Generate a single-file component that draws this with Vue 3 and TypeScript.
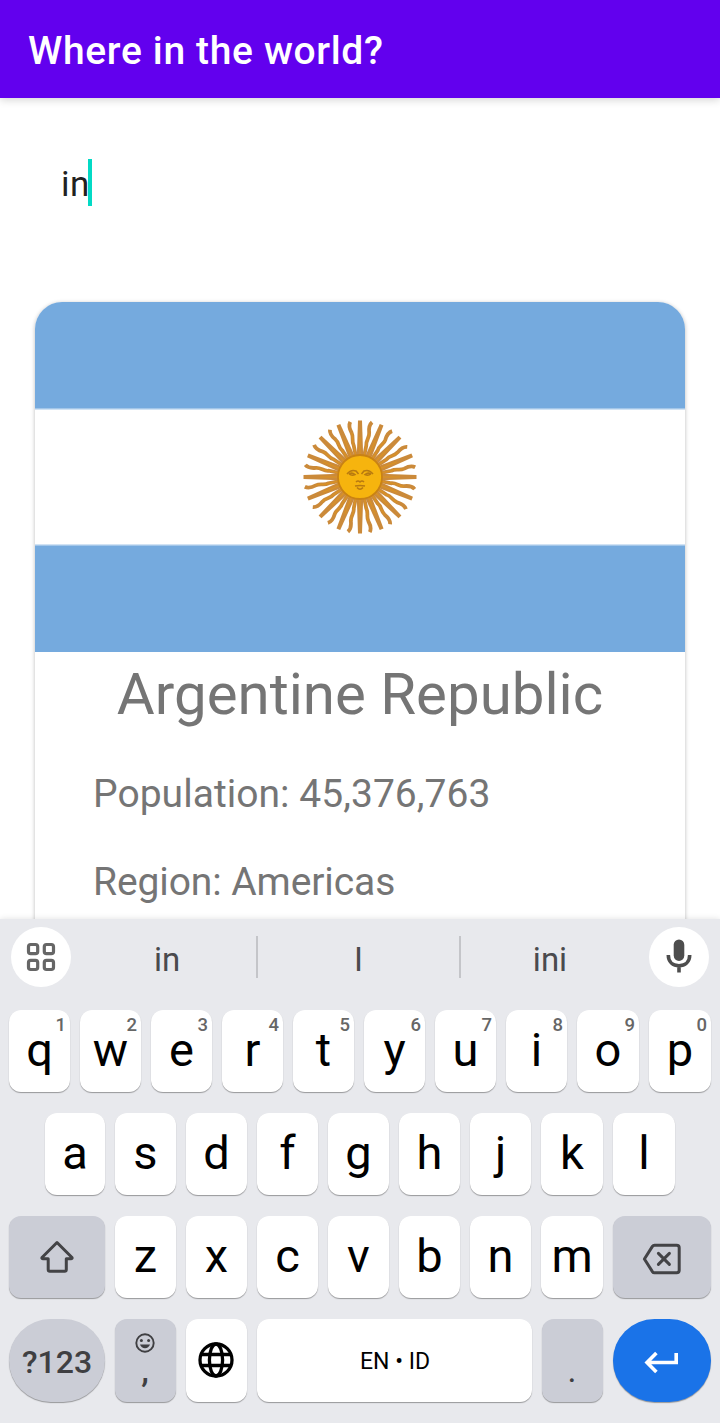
<script setup lang="ts">
import { ref } from 'vue'

interface Key {
  label: string
  hint?: string
}

const search = ref('in')

const country = {
  name: 'Argentine Republic',
  population: 45376763,
  region: 'Americas'
}

const suggestions = ['in', 'I', 'ini']

const topRow: Key[] = 'qwertyuiop'.split('').map((label, i) => ({ label, hint: String((i + 1) % 10) }))
const middleRow = 'asdfghjkl'.split('')
const bottomRow = 'zxcvbnm'.split('')

// 16 straight rays, with a wavy one between each pair
const rays = Array.from({ length: 16 }, (_, i) => i * 22.5)

const press = (label: string) => {
  search.value += label
}
const backspace = () => {
  search.value = search.value.slice(0, -1)
}
</script>

<template>
  <div class="screen">
    <header class="toolbar">
      <h1>Where in the world?</h1>
    </header>

    <main class="content">
      <div class="search"><span>{{ search }}</span><i class="cursor"></i></div>

      <article class="card">
        <div class="flag">
          <svg class="sun" viewBox="-60 -60 120 120">
            <g v-for="angle in rays" :key="angle" :transform="`rotate(${angle})`">
              <path class="ray" d="M-3.2 -20 L-2 -56.5 H2 L3.2 -20 Z" />
              <path class="ray-core" d="M0 -22 V-40" />
              <g transform="rotate(11.25)">
                <path class="wave" d="M0 -20 V-32 C-1.6 -37 1.8 -40 .4 -45 C-1.2 -50 -1.2 -53 1.2 -56" />
                <path class="wave-core" d="M0 -22 V-32 C-1.6 -37 1.8 -40 .4 -45" />
              </g>
            </g>
            <circle class="disc" r="22" />
            <g class="face">
              <path d="M-13 -3 Q-9 -8 -4 -6 L-1.5 -3 M13 -3 Q9 -8 4 -6 L1.5 -3" />
              <path d="M-11 -3 Q-8 -5 -5 -2.5 Q-8 -1 -11 -3 M11 -3 Q8 -5 5 -2.5 Q8 -1 11 -3" />
              <path d="M-4 5 Q-2 3 0 5 Q2 3 4 5" />
              <path d="M-5 9 Q0 8 5 9 M-3 10.5 Q0 14 3 10.5" />
            </g>
          </svg>
        </div>
        <h2>{{ country.name }}</h2>
        <p>Population: {{ country.population.toLocaleString('en-US') }}</p>
        <p class="region">Region: {{ country.region }}</p>
      </article>
    </main>

    <section class="keyboard">
      <div class="strip">
        <button class="round">
          <svg width="30" height="30" viewBox="0 0 30 30" class="apps">
            <rect x="2.5" y="2.5" width="9.2" height="9.2" rx="2.2" />
            <rect x="18.3" y="2.5" width="9.2" height="9.2" rx="2.2" />
            <rect x="2.5" y="18.3" width="9.2" height="9.2" rx="2.2" />
            <rect x="18.3" y="18.3" width="9.2" height="9.2" rx="2.2" />
          </svg>
        </button>
        <div class="suggestions">
          <span v-for="word in suggestions" :key="word">{{ word }}</span>
        </div>
        <button class="round">
          <svg width="26" height="36" viewBox="0 0 26 36">
            <rect class="mic-body" x="7.7" y=".4" width="10.6" height="21.5" rx="5.3" />
            <path class="mic-stand" d="M2.3 16 C2.3 23 7 26.7 13 26.7 S23.7 23 23.7 16 M13 26.7 V33.5" />
          </svg>
        </button>
      </div>

      <div class="row top">
        <button v-for="key in topRow" :key="key.label" class="key" @click="press(key.label)">
          {{ key.label }}<small>{{ key.hint }}</small>
        </button>
      </div>

      <div class="row middle">
        <button v-for="label in middleRow" :key="label" class="key" @click="press(label)">{{ label }}</button>
      </div>

      <div class="row bottom">
        <button class="key dark shift">
          <svg width="36" height="34" viewBox="0 0 36 34" class="line">
            <path d="M18 3.5 L33 18.5 Q33.5 19.7 32 19.7 H27.3 V30.6 Q27.3 32.2 25.7 32.2 H10.8 Q9.2 32.2 9.2 30.6 V19.7 H4 Q2.5 19.7 3 18.5 Z" />
          </svg>
        </button>
        <button v-for="label in bottomRow" :key="label" class="key" @click="press(label)">{{ label }}</button>
        <button class="key dark erase" @click="backspace">
          <svg width="40" height="32" viewBox="0 0 40 32" class="line">
            <path d="M12.5 2.2 H34.6 Q37.2 2.2 37.2 4.8 V27.2 Q37.2 29.8 34.6 29.8 H12.5 Q11.2 29.8 10.4 28.6 L2.4 16 L10.4 3.4 Q11.2 2.2 12.5 2.2 Z" />
            <path d="M16.4 10.4 L27.4 21.4 M27.4 10.4 L16.4 21.4" />
          </svg>
        </button>
      </div>

      <div class="row last">
        <button class="key dark pill symbols">?123</button>
        <button class="key dark comma">
          <svg width="20" height="20" viewBox="0 0 20 20">
            <circle class="smile-ring" cx="10" cy="10" r="8.7" />
            <circle cx="6.4" cy="7.6" r="1.5" />
            <circle cx="13.6" cy="7.6" r="1.5" />
            <path d="M5 11.6 H15 C14.2 14 12.3 15.3 10 15.3 S5.8 14 5 11.6 Z" />
          </svg>
          <span>,</span>
        </button>
        <button class="key lang">
          <svg width="36" height="36" viewBox="0 0 36 36" class="globe">
            <circle cx="18" cy="18" r="16" />
            <ellipse cx="18" cy="18" rx="6.6" ry="16" />
            <path d="M3 12.5 H33 M3 23.5 H33" />
          </svg>
        </button>
        <button class="key space" @click="press(' ')">EN • ID</button>
        <button class="key dark dot">.</button>
        <button class="key pill enter">
          <svg width="36" height="24" viewBox="0 0 36 24">
            <path d="M32.2 3 V12.5 H3.5 M12.4 3 L3 12.5 L12.4 22" />
          </svg>
        </button>
      </div>
    </section>
  </div>
</template>

<style>
body {
  margin: 0;
}
</style>

<style scoped>
.screen {
  width: 720px;
  height: 1423px;
  display: flex;
  flex-direction: column;
  overflow: hidden;
  background: #fff;
  font-family: Roboto, sans-serif;
}

.toolbar {
  height: 98px;
  flex: none;
  display: flex;
  align-items: center;
  padding: 3px 28px 0;
  box-sizing: border-box;
  background: #6200ee;
  box-shadow: 0 2px 8px rgba(0, 0, 0, 0.17);
  z-index: 1;
}

h1 {
  margin: 0;
  font-size: 39px;
  font-weight: 500;
  letter-spacing: 0.65px;
  color: #fff;
}

.content {
  height: 821px;
  flex: none;
  overflow: hidden;
}

.search {
  height: 47px;
  margin: 61px 60px 96px 61px;
  display: flex;
  align-items: center;
  font-size: 35px;
  letter-spacing: 0.5px;
  color: #212121;
}

.search span {
  padding-top: 3px;
}

.cursor {
  width: 4px;
  height: 47px;
  margin-left: -2px;
  background: #03dac5;
}

.card {
  height: 760px;
  margin: 0 35px;
  border-radius: 27px;
  overflow: hidden;
  background: #fff;
  box-shadow: 0 1px 4px rgba(0, 0, 0, 0.27);
  color: #757575;
}

.flag {
  height: 350px;
  display: flex;
  align-items: center;
  justify-content: center;
  background: linear-gradient(#75aade 105.5px, #fff 108.5px, #fff 241.5px, #75aade 244.5px);
}

.sun {
  width: 120px;
  height: 120px;
}

.ray {
  fill: #cb8a3a;
}

.ray-core,
.wave-core {
  fill: none;
  stroke: #dd9420;
  stroke-width: 1;
}

.wave {
  fill: none;
  stroke: #cb8a3a;
  stroke-width: 3.8;
}

.disc {
  fill: #f6b40e;
  stroke: #c98214;
  stroke-width: 1.8;
}

.face {
  fill: none;
  stroke: #b87a10;
  stroke-width: 1.5;
}

h2 {
  margin: 8px 0 0;
  font-size: 58.2px;
  line-height: 69px;
  font-weight: 400;
  text-align: center;
}

p {
  margin: 0 0 42px 58px;
  font-size: 39px;
  line-height: 46px;
  letter-spacing: 0.04px;
}

h2 + p {
  margin-top: 42px;
}

.region {
  letter-spacing: -0.1px;
}

.keyboard {
  flex: 1;
  display: flex;
  flex-direction: column;
  padding: 8px 9px 0;
  background: #e8e9ed;
  box-shadow: 0 0 6px rgba(0, 0, 0, 0.12);
  z-index: 1;
}

button {
  border: none;
  padding: 0;
  font-family: inherit;
  cursor: pointer;
}

.strip {
  height: 60px;
  margin: 0 2px 23px;
  display: flex;
  flex: none;
}

.round {
  width: 60px;
  height: 60px;
  flex: none;
  display: flex;
  align-items: center;
  justify-content: center;
  border-radius: 50%;
  background: #fff;
}

.apps {
  fill: none;
  stroke: #666;
  stroke-width: 3.2;
}

.mic-body {
  fill: #4d4d4d;
}

.mic-stand {
  fill: none;
  stroke: #4d4d4d;
  stroke-width: 3.6;
}

.suggestions {
  flex: 1;
  display: grid;
  grid-template-columns: 187px 203px 1fr;
  align-items: center;
  font-size: 33px;
  color: #4a4a4d;
}

.suggestions span {
  height: 42px;
  line-height: 47px;
  text-align: center;
  border-right: 2px solid #c4c5c9;
  box-sizing: border-box;
}

.suggestions span:first-child {
  padding-left: 7px;
}

.suggestions span:last-child {
  border: none;
  padding-right: 10px;
}

.row {
  display: grid;
  grid-template-rows: 100%;
  gap: 10px;
  height: 82px;
  flex: none;
  margin-bottom: 21px;
}

.top {
  grid-template-columns: repeat(8, 61px) 62px 62px;
}

.middle {
  margin-left: 36px;
  grid-template-columns: 60px repeat(6, 61px) 62px 62px;
}

.bottom {
  grid-template-columns: 96px repeat(6, 61px) 62px 98px;
}

.last {
  height: 83px;
  margin-bottom: 0;
  grid-template-columns: 96px 61px 61px 275px 61px 98px;
}

.key {
  position: relative;
  display: flex;
  align-items: center;
  justify-content: center;
  box-sizing: border-box;
  padding: 0 0 4px;
  border-radius: 12px;
  background: #fff;
  box-shadow: 0 1px 1px rgba(0, 0, 0, 0.35);
  font-size: 47px;
  line-height: 1;
  color: #000;
}

.key small {
  position: absolute;
  top: 4px;
  right: 4px;
  font-size: 18.5px;
  font-weight: 500;
  line-height: 22px;
  color: #666;
}

.dark {
  background: #cbcdd6;
  color: #3f3f42;
}

.pill {
  border-radius: 42px;
}

.line {
  fill: none;
  stroke: #434346;
  stroke-width: 3;
  stroke-linejoin: round;
  stroke-linecap: round;
}

.shift {
  padding: 0 0 2px;
}

.erase {
  padding: 3px 0 0;
}

.symbols {
  padding: 3px 0 0;
  font-size: 32px;
  font-weight: 500;
}

.comma {
  flex-direction: column;
  justify-content: flex-start;
  padding: 14px 1px 0 0;
  fill: #3f3f42;
  font-size: 34px;
  font-weight: 500;
}

.comma span {
  line-height: 40px;
  margin-top: -3px;
}

.smile-ring {
  fill: none;
  stroke: #3f3f42;
  stroke-width: 1.9;
}

.lang {
  padding: 0 1px 1px 0;
}

.globe {
  fill: none;
  stroke: #000;
  stroke-width: 3.3;
}

.space {
  padding: 2px 0 0 1px;
  font-size: 23px;
}

.dot {
  font-size: 34px;
  padding: 19px 1px 0 0;
}

.enter {
  background: #1a73e8;
  padding: 2px 0 0;
}

.enter svg {
  fill: none;
  stroke: #fff;
  stroke-width: 3.6;
}
</style>
